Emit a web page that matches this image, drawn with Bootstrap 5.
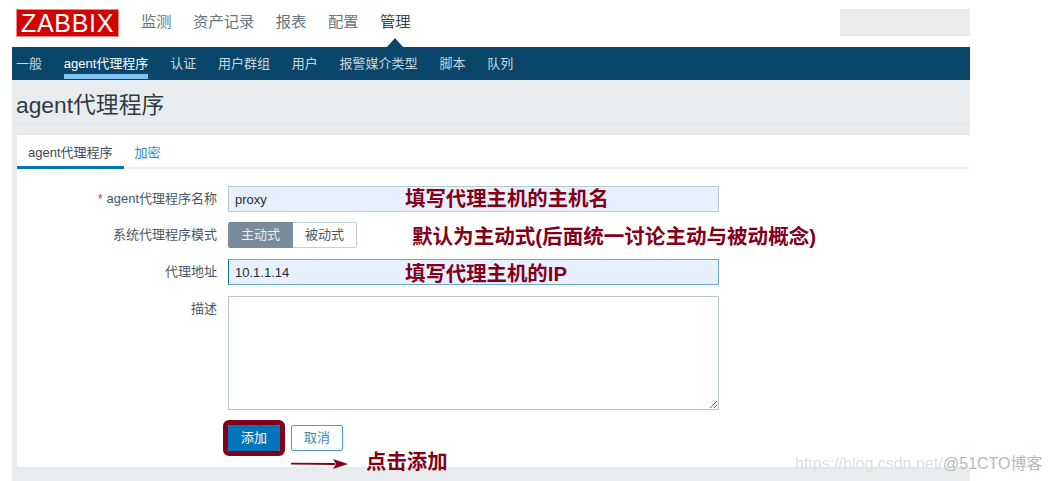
<!DOCTYPE html>
<html lang="zh-CN">
<head>
<meta charset="UTF-8" />
<meta name="viewport" content="width=device-width, initial-scale=1" />
<title>agent代理程序</title>
<link href="https://cdn.jsdelivr.net/npm/bootstrap@5.3.0/dist/css/bootstrap.min.css" rel="stylesheet" />
<style>
    html, body { height: 100%; }
    body {
        background: #fff;
        font-family: "Liberation Sans", "Noto Sans CJK SC", sans-serif;
        font-size: 13px;
        color: #3d4a52;
        overflow: hidden;
    }
    .shot { width: 958px; height: 481px; margin-left: 12px; position: relative; }
    .top-bar { height: 47px; padding-left: 4px; background: #fff; }
    .zbx-logo {
        width: 103px; height: 28px; background: #d40000; color: #fff; margin-top: 9px;
        font-size: 25px; line-height: 26px; letter-spacing: 0.7px; text-align: center;
        border: 1px solid #ee8a8a;
    }
    .main-menu { margin-left: 22px; padding-top: 11px; gap: 21.5px; font-size: 15.3px; color: #68757d; }
    .main-menu .on { color: #3a464e; position: relative; }
    .main-menu .on::after {
        content: ""; position: absolute; left: 6.5px; top: 27px;
        border: 8.5px solid transparent; border-top: 0; border-bottom: 9px solid #0a466a;
    }
    .search-stub { width: 130px; height: 27px; margin-top: 9px; background: #ececec; border: 1px solid #e9e9e9; border-right: 0; }
    .sub-menu { height: 33px; background: #0a466a; color: #c9d6de; padding-left: 4px; gap: 21.8px; }
    .sub-menu span { line-height: 33px; height: 33px; }
    .sub-menu .on { color: #fff; border-bottom: 5px solid #7ec3f2; height: 32px; }
    .page-body { height: 401px; background: #e9ecef; padding: 0 0 0 5px; }
    .page-title {
        font-size: 22.8px; font-weight: 400; color: #2f3b42; margin: 0 0 0 -1px;
        height: 43px; line-height: 50px; white-space: nowrap;
    }
    .title-line { height: 1px; background: #dee2e6; margin-left: -5px; margin-bottom: 10px; }
    .form-panel { background: #fff; height: 333px; border-top: 1px solid #e1e5e8; }
    .panel-tabs { height: 34px; border-bottom: 2px solid #f0f2f3; }
    .panel-tabs span { line-height: 35px; height: 34px; padding: 0 11px; white-space: nowrap; }
    .panel-tabs .on { color: #3d4a52; border-bottom: 3px solid #0275b8; flex: none; }
    .panel-tabs .lnk { color: #2f8dc6; }
    .form-rows { padding-top: 17px; }
    .f-row { margin-bottom: 10px; }
    .f-row.gap-after { margin-bottom: 11px; }
    .f-label { width: 200px; text-align: right; margin-right: 11px; color: #4b575f; line-height: 26px; flex: none; }
    .f-label i { color: #dc3545; font-style: normal; }
    .f-input.form-control {
        width: 491px; height: 26px; min-height: 0; padding: 0 6px; font-size: 13px; color: #1f2c33;
        background: #e8f0fe; border: 1px solid #bac8d0; border-radius: 0;
    }
    .f-input.is-focus { border-color: #6aa9cf; border-left-color: #0275b8; }
    textarea.f-input.form-control { height: 114px; background: #fff; }
    .mode-group .btn {
        height: 26px; padding: 0; font-size: 13px; line-height: 24px; border-radius: 2px;
        border: 1px solid #c4d0d7; color: #4b575f; background: #fff; width: 65px;
    }
    .mode-group .btn.active { background: #7a8c99; border-color: #7a8c99; color: #e8edf0; }
    .action-row { padding-left: 211px; margin-top: 15px; gap: 11px; }
    .btn-add, .btn-cancel { width: 52px; height: 26px; padding: 0; font-size: 13px; line-height: 24px; border-radius: 2px; }
    .btn-add { background: #0275b8; border: 1px solid #0275b8; color: #fff; outline: 5px solid #820018; border-radius: 1px; }
    .btn-cancel { background: #fff; border: 1px solid #4a9bd0; color: #4a86ad; }
    .note {
        position: absolute; font-size: 20.4px; font-weight: 700; color: #820018;
        line-height: 24px; white-space: nowrap;
    }
    .note-1 { left: 393px; top: 187px; }
    .note-2 { left: 400px; top: 225px; font-size: 20.55px; }
    .note-3 { left: 393px; top: 262px; }
    .note-4 { left: 354px; top: 450px; }
    .note-arrow { position: absolute; left: 279px; top: 457px; }
    .mark-csdn { position: absolute; left: 783px; top: 452px; font-size: 16px; color: #dfdfdf; white-space: nowrap; }
    .mark-cto { position: absolute; left: 931px; top: 452px; font-size: 16px; color: #b9b9b9; white-space: nowrap; }
</style>
</head>
<body>
<div class="shot">
    <div class="top-bar d-flex">
        <div class="zbx-logo">ZABBIX</div>
        <div class="main-menu d-flex align-items-start">
            <span>监测</span><span>资产记录</span><span>报表</span><span>配置</span><span class="on">管理</span>
        </div>
        <div class="search-stub ms-auto"></div>
    </div>
    <div class="sub-menu d-flex">
        <span>一般</span><span class="on">agent代理程序</span><span>认证</span><span>用户群组</span><span>用户</span><span>报警媒介类型</span><span>脚本</span><span>队列</span>
    </div>
    <div class="page-body">
        <h1 class="page-title">agent代理程序</h1>
        <div class="title-line"></div>
        <div class="form-panel">
            <div class="panel-tabs d-flex">
                <span class="on">agent代理程序</span><span class="lnk">加密</span>
            </div>
            <form class="form-rows">
                <div class="f-row d-flex">
                    <label class="f-label"><i>*</i> agent代理程序名称</label>
                    <input class="form-control f-input" value="proxy" />
                </div>
                <div class="f-row gap-after d-flex">
                    <label class="f-label">系统代理程序模式</label>
                    <div class="btn-group mode-group">
                        <button type="button" class="btn active">主动式</button>
                        <button type="button" class="btn">被动式</button>
                    </div>
                </div>
                <div class="f-row gap-after d-flex">
                    <label class="f-label">代理地址</label>
                    <input class="form-control f-input is-focus" value="10.1.1.14" />
                </div>
                <div class="f-row d-flex">
                    <label class="f-label">描述</label>
                    <textarea class="form-control f-input"></textarea>
                </div>
                <div class="action-row d-flex">
                    <button type="button" class="btn btn-add">添加</button>
                    <button type="button" class="btn btn-cancel">取消</button>
                </div>
            </form>
        </div>
    </div>
    <div class="note note-1">填写代理主机的主机名</div>
    <div class="note note-2">默认为主动式(后面统一讨论主动与被动概念)</div>
    <div class="note note-3">填写代理主机的IP</div>
    <div class="note note-4">点击添加</div>
    <svg class="note-arrow" width="58" height="14" viewBox="0 0 58 14">
        <path d="M0 5.8 L44 6 L44 8 L0 7.4 Z M42 2 L57 7 L42 12 L45 7 Z" fill="#820018" />
    </svg>
    <div class="mark-csdn">https://blog.csdn.net/</div>
    <div class="mark-cto">@51CTO博客</div>
</div>
<script src="https://cdn.jsdelivr.net/npm/bootstrap@5.3.0/dist/js/bootstrap.bundle.min.js"></script>
</body>
</html>
